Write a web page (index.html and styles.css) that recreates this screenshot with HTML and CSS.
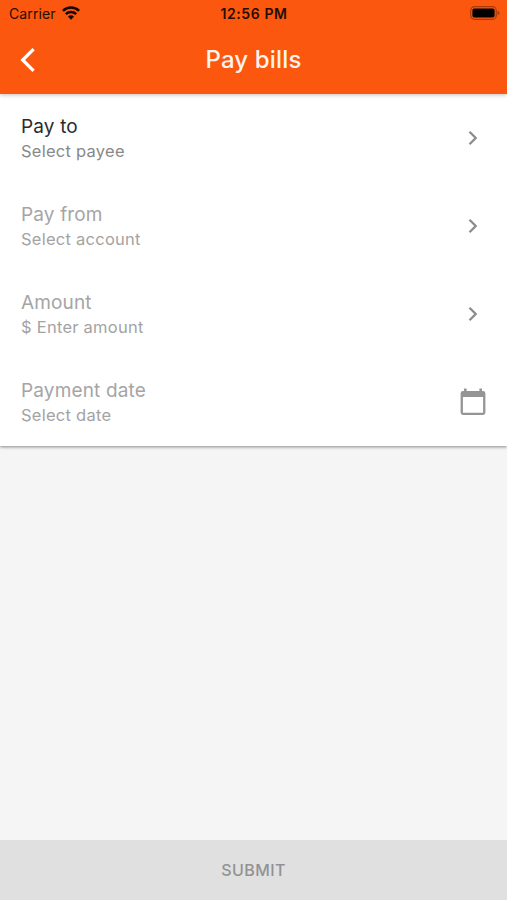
FILE: index.html
```html
<!DOCTYPE html>
<html lang="en">
<head>
<meta charset="utf-8">
<title>Pay bills</title>
<link rel="stylesheet" href="styles.css">
</head>
<body>
<div class="screen">
  <header class="header">
    <div class="status">
      <div class="carrier"><span class="carrier-name">Carrier</span>
        <svg class="wifi" width="18" height="14" viewBox="0 0 18 14"><g fill="none" stroke="#160800" stroke-width="2.5"><path d="M.9 4.900a11.500 11.500 0 0 1 16.200 0"/><path d="M3.800 8.100a7.400 7.400 0 0 1 10.400 0"/></g><path fill="#160800" d="M5.900 10.600a4.500 4.500 0 0 1 6.200 0L9 13.700z"/></svg>
      </div>
      <div class="time">12:56 PM</div>
      <svg class="battery" width="30" height="14" viewBox="0 0 30 14"><rect x=".7" y=".7" width="25.600" height="12.600" rx="3.800" fill="none" stroke="#a83a0c" stroke-width="1.200"/><rect x="2.400" y="2.400" width="22.200" height="9.200" rx="2" fill="#000"/><path fill="#a83a0c" d="M27.600 4.800c2.500.8 2.500 3.600 0 4.400z"/></svg>
    </div>
    <div class="bar">
      <svg class="back" width="16" height="26" viewBox="0 0 16 26"><path d="M13.600 2.100 2.700 13l10.900 10.900" fill="none" stroke="#fff" stroke-width="3.300"/></svg>
      <h1 class="title">Pay bills</h1>
    </div>
  </header>
  <main class="card">
    <div class="row active">
      <div class="text"><div class="label">Pay to</div><div class="hint">Select payee</div></div>
      <svg class="chevron" width="10" height="16" viewBox="0 0 10 16"><path d="m1.500 1.800 6.200 6.200-6.200 6.200"/></svg>
    </div>
    <div class="row">
      <div class="text"><div class="label">Pay from</div><div class="hint">Select account</div></div>
      <svg class="chevron" width="10" height="16" viewBox="0 0 10 16"><path d="m1.500 1.800 6.200 6.200-6.200 6.200"/></svg>
    </div>
    <div class="row">
      <div class="text"><div class="label">Amount</div><div class="hint">$ Enter amount</div></div>
      <svg class="chevron" width="10" height="16" viewBox="0 0 10 16"><path d="m1.500 1.800 6.200 6.200-6.200 6.200"/></svg>
    </div>
    <div class="row">
      <div class="text"><div class="label">Payment date</div><div class="hint">Select date</div></div>
      <svg class="calendar" width="26" height="28" viewBox="0 0 26 28"><path fill="#959595" fill-rule="evenodd" d="M4 .5h2.600V3h12.800V.5H22V3h1a2.400 2.400 0 0 1 2.400 2.400v19.200A2.400 2.400 0 0 1 23 27H3a2.400 2.400 0 0 1-2.400-2.400V5.400A2.400 2.400 0 0 1 3 3h1zM2.900 9v15.700h20.200V9z"/></svg>
    </div>
  </main>
  <button class="submit">SUBMIT</button>
</div>
</body>
</html>
```
FILE: styles.css
```css
* { box-sizing: border-box; }
body { margin: 0; font-family: Inter, "Liberation Sans", sans-serif; }
.screen { height: 900px; display: flex; flex-direction: column; background: #f5f5f5; }
.header { height: 94px; flex: none; background: #fb570e; z-index: 1; box-shadow: 0 1px 4px rgba(0, 0, 0, .25); }
.status { height: 27px; padding: 0 7px 0 9px; display: grid; grid-template-columns: 1fr auto 1fr; align-items: center; color: #260d02; }
.carrier { display: flex; align-items: center; gap: 6px; }
.wifi { margin-top: -2px; }
.battery { margin-top: -1px; justify-self: end; }
.carrier-name { font-size: 14px; line-height: 27px; letter-spacing: .1px; }
.time { margin-left: -1px; font-size: 14px; font-weight: 600; line-height: 27px; letter-spacing: .6px; }
.bar { height: 65px; padding: 0 20px; display: grid; grid-template-columns: 1fr auto 1fr; align-items: center; }
.title { margin: 0; font-size: 24px; font-weight: 500; line-height: 30px; letter-spacing: .15px; color: #fff3ed; }
.card { flex: none; background: #fff; box-shadow: 0 1px 3px rgba(0, 0, 0, .45); }
.row { height: 88px; padding: 0 21px; display: flex; align-items: center; justify-content: space-between; }
.text { padding-top: 1px; }
.label { font-size: 19px; line-height: 25px; color: #a5a5a5; letter-spacing: .15px; }
.hint { font-size: 16.500px; line-height: 24px; color: #a3a3a3; letter-spacing: .25px; }
.active .label { color: #2b2b2b; }
.active .hint { color: #888; }
.chevron { margin-right: 8px; fill: none; stroke: #8c8c8c; stroke-width: 2.300; }
.submit { height: 60px; margin-top: auto; padding: 0; border: 0; background: #e0e0e0; color: #929292; font: 500 16px/60px Inter, "Liberation Sans", sans-serif; letter-spacing: .4px; }
```
